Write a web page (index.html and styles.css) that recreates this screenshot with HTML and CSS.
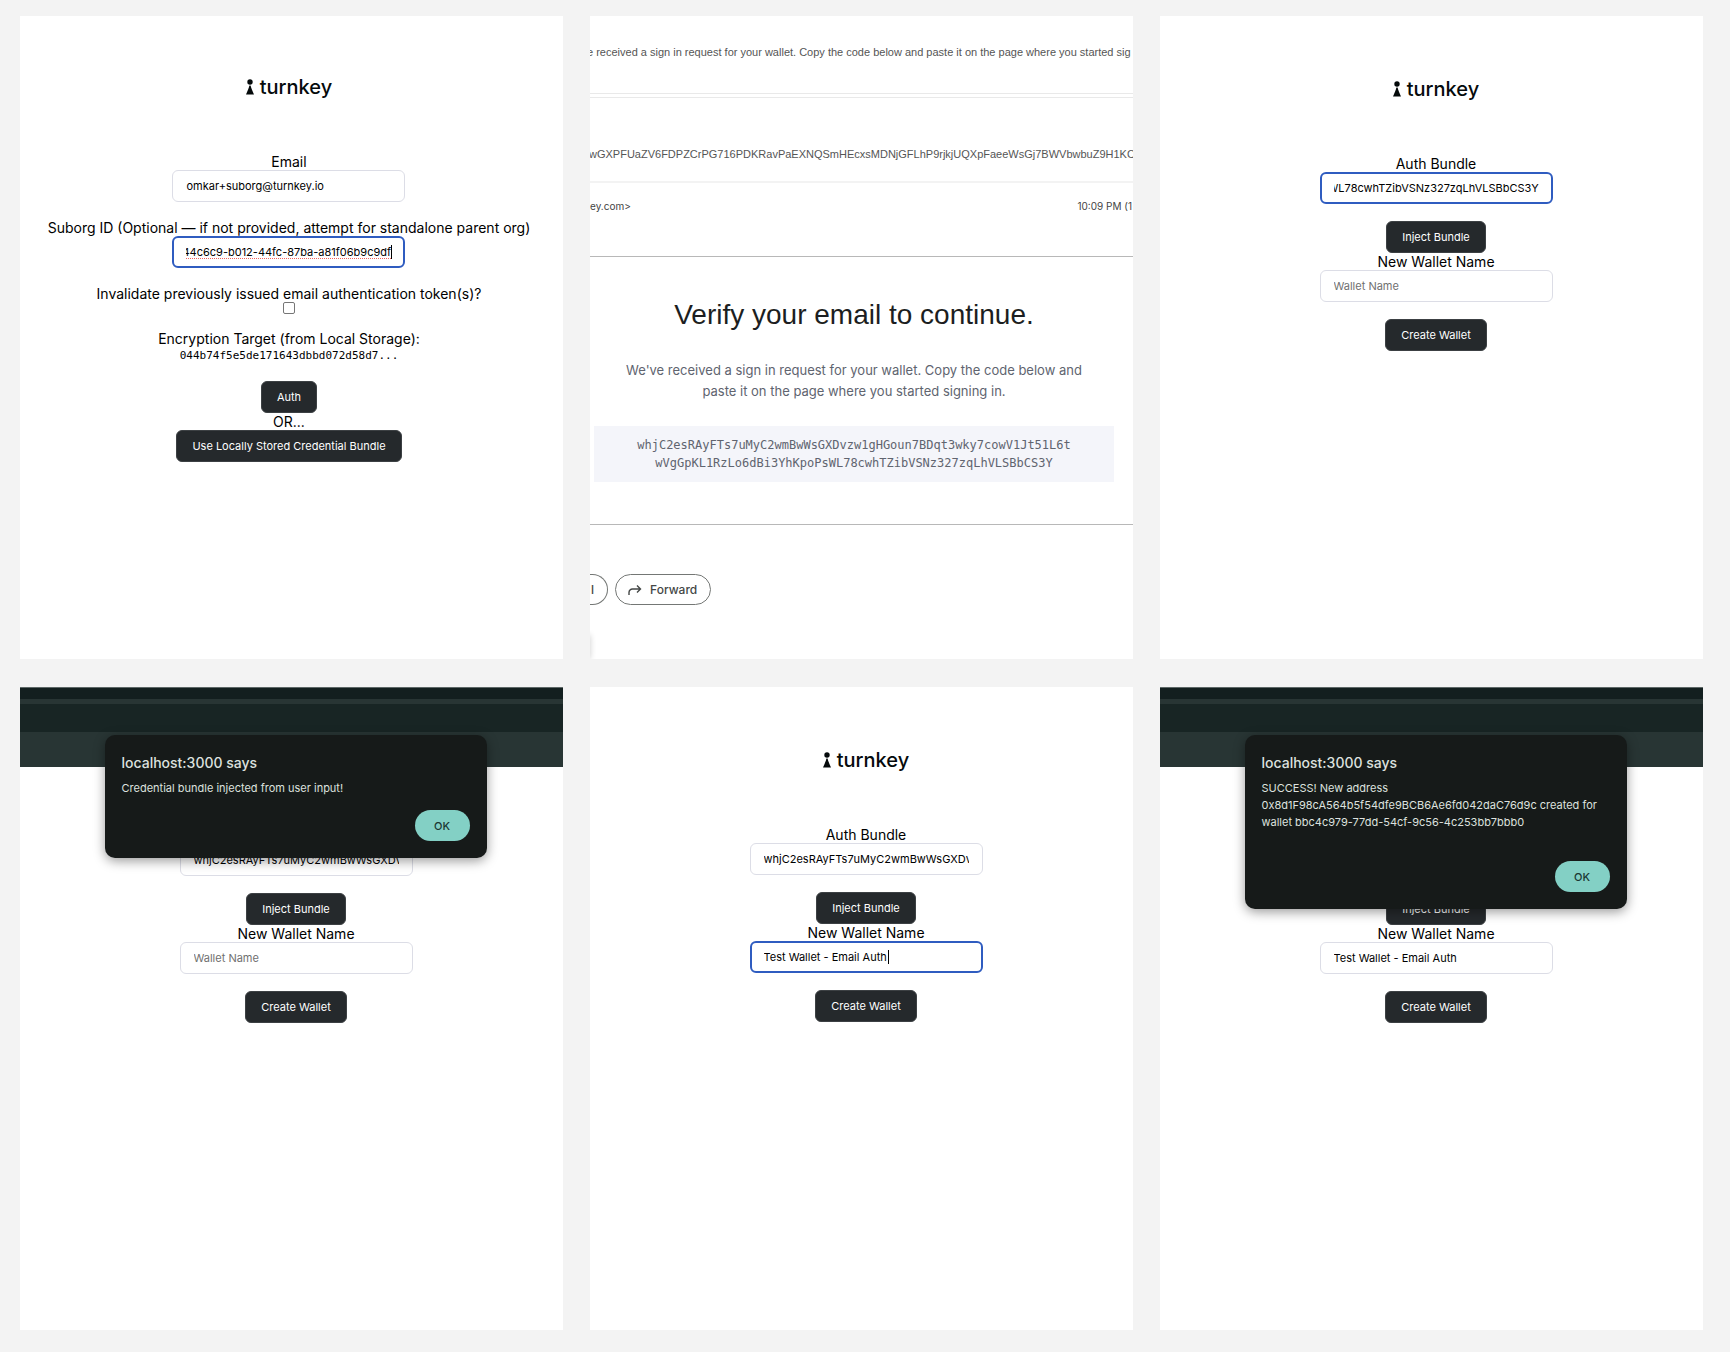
FILE: index.html
```html
<!DOCTYPE html>
<html lang="en">
<head>
<meta charset="utf-8">
<meta name="viewport" content="width=device-width, initial-scale=1">
<title>Turnkey email auth</title>
<link rel="stylesheet" href="styles.css">
</head>
<body>
<svg class="sprite" aria-hidden="true">
  <symbol id="pawn" viewBox="0 0 8 16">
    <circle cx="4" cy="3" r="2.7"/>
    <path d="M3.400 6.600h1.200C4.900 8.600 6.600 12.400 8 15.400H0C1.400 12.400 3.100 8.600 3.400 6.600z"/>
  </symbol>
</svg>
<main class="board">

  <section class="panel panel--auth">
    <div class="logo"><svg class="logo-mark"><use href="#pawn"/></svg><span>turnkey</span></div>
    <form class="form">
      <div class="field">
        <label for="email">Email</label>
        <input class="text-input" id="email" type="text" value="omkar+suborg@turnkey.io">
      </div>
      <div class="field">
        <label for="suborg">Suborg ID (Optional — if not provided, attempt for standalone parent org)</label>
        <div class="input-wrap">
          <input class="text-input is-focused" id="suborg" type="text" value="44c6c9-b012-44fc-87ba-a81f06b9c9df" data-scroll-end>
          <span class="misspelling"></span>
          <span class="caret caret--end"></span>
        </div>
      </div>
      <div class="field field--check">
        <label for="invalidate">Invalidate previously issued email authentication token(s)?</label>
        <input class="check" id="invalidate" type="checkbox">
      </div>
      <div class="field">
        <span>Encryption Target (from Local Storage):</span>
        <code class="target">044b74f5e5de171643dbbd072d58d7...</code>
      </div>
      <button class="btn" type="button">Auth</button>
      <span>OR...</span>
      <button class="btn" type="button">Use Locally Stored Credential Bundle</button>
    </form>
  </section>

  <section class="panel panel--mail">
    <p class="snippet snippet--first">e received a sign in request for your wallet. Copy the code below and paste it on the page where you started sig</p>
    <p class="snippet snippet--second">wGXPFUaZV6FDPZCrPG716PDKRavPaEXNQSmHEcxsMDNjGFLhP9rjkjUQXpFaeeWsGj7BWVbwbuZ9H1KC</p>
    <div class="mail-meta"><span>ey.com&gt;</span><span>10:09 PM (1</span></div>
    <article class="mail-body">
      <h1>Verify your email to continue.</h1>
      <p>We've received a sign in request for your wallet. Copy the code below and<br>paste it on the page where you started signing in.</p>
      <code class="bundle">whjC2esRAyFTs7uMyC2wmBwWsGXDvzw1gHGoun7BDqt3wky7cowV1Jt51L6t<br>wVgGpKL1RzLo6dBi3YhKpoPsWL78cwhTZibVSNz327zqLhVLSBbCS3Y</code>
    </article>
    <div class="mail-actions">
      <button class="pill pill--cut" type="button">l</button>
      <button class="pill" type="button"><svg class="forward" viewBox="0 0 14 12"><path d="M1 11V8.500a3.500 3.500 0 0 1 3.500-3.500H12.500M9 1.500L12.500 5L9 8.500"/></svg>Forward</button>
    </div>
    <span class="edge-shadow"></span>
  </section>

  <section class="panel">
    <div class="logo"><svg class="logo-mark"><use href="#pawn"/></svg><span>turnkey</span></div>
    <form class="form">
      <div class="field">
        <label for="bundle-a">Auth Bundle</label>
        <input class="text-input is-focused" id="bundle-a" type="text" value="WL78cwhTZibVSNz327zqLhVLSBbCS3Y" data-scroll-end>
      </div>
      <button class="btn" type="button">Inject Bundle</button>
      <div class="field">
        <label for="wallet-a">New Wallet Name</label>
        <input class="text-input" id="wallet-a" type="text" placeholder="Wallet Name">
      </div>
      <button class="btn" type="button">Create Wallet</button>
    </form>
  </section>

  <section class="panel panel--chrome">
    <div class="chrome"><i class="tabs"></i><i class="toolbar"></i></div>
    <form class="form">
      <div class="field">
        <label for="bundle-b">Auth Bundle</label>
        <input class="text-input" id="bundle-b" type="text" value="whjC2esRAyFTs7uMyC2wmBwWsGXDvzw1gHGoun7BDqt3wky7">
      </div>
      <button class="btn" type="button">Inject Bundle</button>
      <div class="field">
        <label for="wallet-b">New Wallet Name</label>
        <input class="text-input" id="wallet-b" type="text" placeholder="Wallet Name">
      </div>
      <button class="btn" type="button">Create Wallet</button>
    </form>
    <div class="alert" role="alertdialog" aria-labelledby="alert-b">
      <h2 id="alert-b">localhost:3000 says</h2>
      <p>Credential bundle injected from user input!</p>
      <button class="ok" type="button">OK</button>
    </div>
  </section>

  <section class="panel">
    <div class="logo"><svg class="logo-mark"><use href="#pawn"/></svg><span>turnkey</span></div>
    <form class="form">
      <div class="field">
        <label for="bundle-c">Auth Bundle</label>
        <input class="text-input" id="bundle-c" type="text" value="whjC2esRAyFTs7uMyC2wmBwWsGXDvzw1gHGoun7BDqt3wky7">
      </div>
      <button class="btn" type="button">Inject Bundle</button>
      <div class="field">
        <label for="wallet-c">New Wallet Name</label>
        <div class="input-wrap">
          <input class="text-input is-focused" id="wallet-c" type="text" value="Test Wallet - Email Auth">
          <span class="caret caret--name"></span>
        </div>
      </div>
      <button class="btn" type="button">Create Wallet</button>
    </form>
  </section>

  <section class="panel panel--chrome">
    <div class="chrome"><i class="tabs"></i><i class="toolbar"></i></div>
    <form class="form">
      <div class="field">
        <label for="bundle-d">Auth Bundle</label>
        <input class="text-input" id="bundle-d" type="text" value="whjC2esRAyFTs7uMyC2wmBwWsGXDvzw1gHGoun7BDqt3wky7">
      </div>
      <button class="btn" type="button">Inject Bundle</button>
      <div class="field">
        <label for="wallet-d">New Wallet Name</label>
        <input class="text-input" id="wallet-d" type="text" value="Test Wallet - Email Auth">
      </div>
      <button class="btn" type="button">Create Wallet</button>
    </form>
    <div class="alert alert--long" role="alertdialog" aria-labelledby="alert-d">
      <h2 id="alert-d">localhost:3000 says</h2>
      <p>SUCCESS! New address<br>0x8d1F98cA564b5f54dfe9BCB6Ae6fd042daC76d9c created for<br>wallet bbc4c979-77dd-54cf-9c56-4c253bb7bbb0</p>
      <button class="ok" type="button">OK</button>
    </div>
  </section>

</main>
<script src="app.js"></script>
</body>
</html>
```
FILE: styles.css
```css
* { box-sizing: border-box; }

body {
  margin: 0;
  background: #f3f3f3;
  color: #000;
  font: 14px/17px Inter, "Liberation Sans", sans-serif;
}

h1, h2, p { margin: 0; }
button, input { margin: 0; font-family: inherit; }

.sprite { position: absolute; width: 0; height: 0; }

.board {
  display: grid;
  grid-template-columns: repeat(3, minmax(0, 1fr));
  grid-auto-rows: 1fr;
  gap: 28px 27px;
  min-height: 100vh;
  padding: 16px 27px 22px 20px;
}

.panel {
  position: relative;
  display: flex;
  flex-direction: column;
  align-items: center;
  overflow: hidden;
  padding: 61px 0 48px 9px;
  background: #fff;
}

.panel--auth { padding: 59px 5px 48px 0; }

/* Logo */
.logo {
  display: flex;
  align-items: center;
  gap: 6px;
  height: 24px;
  margin-bottom: 54px;
  color: #050a0b;
  font-size: 20px;
  font-weight: 500;
  line-height: 24px;
}

.logo-mark { width: 8px; height: 16px; fill: #050a0b; }

/* Forms */
.form {
  display: flex;
  flex-direction: column;
  align-items: center;
  text-align: center;
}

.field {
  display: flex;
  flex-direction: column;
  align-items: center;
  margin-bottom: 17px;
}

.field--check { margin-bottom: 16px; }

.input-wrap { position: relative; display: flex; }

.text-input {
  width: 233px;
  height: 32px;
  padding: 0 13px;
  border: 1px solid #dcdde6;
  border-radius: 6px;
  background: #fff;
  color: #000;
  font-size: 11px;
}

.text-input::placeholder { color: #707070; opacity: 1; }

.text-input.is-focused { padding: 0 12px; border: 2px solid #2f5cc0; }

.misspelling {
  position: absolute;
  right: 14px;
  bottom: 9px;
  left: 14px;
  border-bottom: 1px dotted #f0625c;
}

.caret {
  position: absolute;
  top: 9px;
  width: 1px;
  height: 14px;
  background: #000;
}

.caret--end { right: 13px; }
.caret--name { left: 138px; }

.check {
  width: 12px;
  height: 12px;
  appearance: none;
  border: 1px solid #767676;
  border-radius: 2px;
  background: #fff;
}

.target {
  font: 11px/17px "DejaVu Sans Mono", monospace;
}

.btn {
  height: 32px;
  padding: 0 15px;
  border: 1px solid #3c4043;
  border-radius: 6px;
  background: #25292c;
  color: #fff;
  font-size: 11px;
}

/* Mail */
.panel--mail { display: block; padding: 0; }

.snippet {
  overflow: hidden;
  color: #555;
  font: 11px/17px "Liberation Sans", Arial, sans-serif;
  white-space: nowrap;
}

.snippet--first {
  height: 78px;
  padding-top: 28px;
  border-bottom: 1px solid #e9e9e9;
  text-indent: -3px;
}

.snippet--second {
  height: 86px;
  margin-top: 3px;
  padding-top: 48px;
  border-top: 1px solid #e9e9e9;
  border-bottom: 2px solid #f3f3f3;
  text-indent: -1px;
}

.mail-meta {
  display: flex;
  justify-content: space-between;
  height: 73px;
  padding: 15px 1px 0 0;
  color: #444;
  font-size: 10px;
}

.mail-body {
  display: flex;
  flex-direction: column;
  align-items: center;
  padding: 39px 19px 42px 4px;
  border-top: 1px solid #b8b8b8;
  border-bottom: 1px solid #b8b8b8;
  text-align: center;
}

.mail-body h1 {
  margin-bottom: 26px;
  color: #1c1e21;
  font-family: "Liberation Sans", Arial, sans-serif;
  font-size: 28px;
  font-weight: 400;
  line-height: 38px;
  white-space: nowrap;
}

.mail-body p {
  margin-bottom: 24px;
  color: #60646f;
  font-size: 13px;
  line-height: 21px;
}

.bundle {
  align-self: stretch;
  padding: 10px 0;
  background: #f4f5fa;
  color: #60646f;
  font: 12px/18px "DejaVu Sans Mono", monospace;
}

.mail-actions { display: flex; gap: 7px; margin-top: 49px; }

.pill {
  display: flex;
  align-items: center;
  gap: 8px;
  height: 31px;
  padding: 0 13px 0 12px;
  border: 1px solid #747775;
  border-radius: 16px;
  background: #fff;
  color: #444746;
  font-size: 12px;
  font-weight: 500;
}

.pill--cut {
  padding: 0 13px 0 1px;
  border-left: 0;
  border-radius: 0 16px 16px 0;
}

.forward { width: 14px; height: 12px; fill: none; stroke: #444746; stroke-width: 1.4; }

.edge-shadow {
  position: absolute;
  bottom: 0;
  left: -8px;
  width: 8px;
  height: 24px;
  box-shadow: 0 0 6px rgba(0, 0, 0, .2);
}

/* Browser window */
.panel--chrome { padding: 0 0 48px; }
.panel--chrome .form { padding: 60px 0 0 9px; }

.chrome {
  display: flex;
  flex-direction: column;
  align-self: stretch;
  gap: 5px;
  height: 80px;
  padding-bottom: 35px;
  background: #283534;
}

.tabs { height: 12px; border-top: 1px solid #5d6766; background: #131f1f; }
.toolbar { flex: 1; background: #182524; }

.alert {
  position: absolute;
  top: 48px;
  left: calc(50% + 4px);
  display: flex;
  flex-direction: column;
  width: 382px;
  padding: 19px 17px 17px;
  border-radius: 10px;
  background: #161a19;
  box-shadow: 0 3px 12px rgba(0, 0, 0, .4);
  color: #dde1df;
  transform: translateX(-50%);
}

.alert h2 { margin-bottom: 9px; font-size: 14px; font-weight: 500; line-height: 17px; }
.alert p { margin-bottom: 13px; font-size: 11px; line-height: 17px; }
.alert--long p { margin-bottom: 30px; }

.ok {
  align-self: flex-end;
  width: 55px;
  height: 31px;
  border: 0;
  border-radius: 16px;
  background: #83d0c5;
  color: #1a3733;
  font-size: 11px;
  font-weight: 500;
}
```
FILE: app.js
```js
document.querySelectorAll('[data-scroll-end]').forEach((input) => {
  input.scrollLeft = input.scrollWidth;
});
```
